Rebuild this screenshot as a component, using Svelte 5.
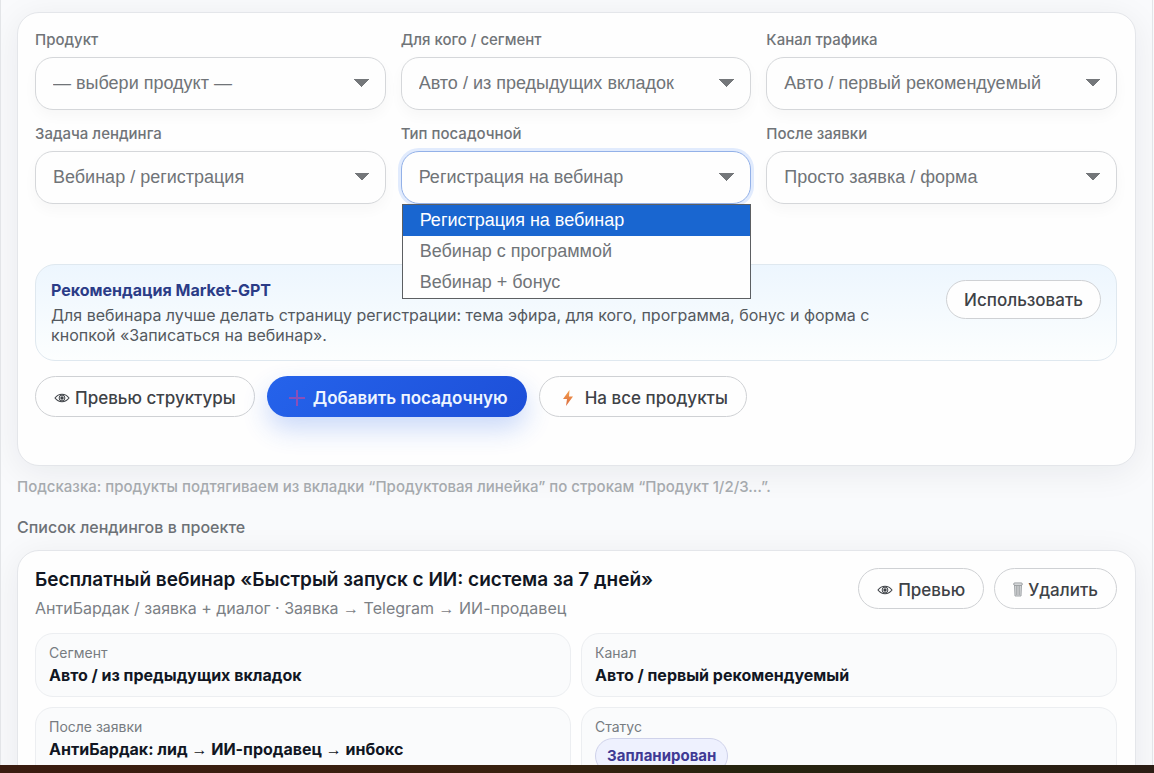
<script>
  let fields = $state([
    { id: 'product', label: 'Продукт', value: '— выбери продукт —', options: ['— выбери продукт —'] },
    { id: 'segment', label: 'Для кого / сегмент', value: 'Авто / из предыдущих вкладок', options: ['Авто / из предыдущих вкладок'] },
    { id: 'channel', label: 'Канал трафика', value: 'Авто / первый рекомендуемый', options: ['Авто / первый рекомендуемый'] },
    { id: 'goal', label: 'Задача лендинга', value: 'Вебинар / регистрация', options: ['Вебинар / регистрация'] },
    {
      id: 'type',
      label: 'Тип посадочной',
      value: 'Регистрация на вебинар',
      options: ['Регистрация на вебинар', 'Вебинар с программой', 'Вебинар + бонус']
    },
    { id: 'after', label: 'После заявки', value: 'Просто заявка / форма', options: ['Просто заявка / форма'] }
  ])
  let openField = $state('type')

  const route = 'АнтиБардак / заявка + диалог · Заявка → Telegram → ИИ-продавец'
  const details = [
    { label: 'Сегмент', value: 'Авто / из предыдущих вкладок' },
    { label: 'Канал', value: 'Авто / первый рекомендуемый' },
    { label: 'После заявки', value: 'АнтиБардак: лид → ИИ-продавец → инбокс' },
    { label: 'Статус', value: 'Запланирован', badge: true }
  ]

  function toggle(event, field) {
    if (field.options.length < 2) return
    event.preventDefault()
    openField = openField === field.id ? '' : field.id
  }

  function choose(field, option) {
    field.value = option
    openField = ''
  }
</script>

{#snippet eye()}
  <svg class="eye" viewBox="0 0 16 12" aria-hidden="true">
    <path d="M1 6C3 3.400 5.300 2.300 8 2.300S13 3.400 15 6C13 8.600 10.700 9.700 8 9.700S3 8.600 1 6Z" fill="none" stroke="currentColor" stroke-width="1.100" />
    <circle cx="8" cy="6" r="2.900" fill="none" stroke="currentColor" stroke-width="1" />
    <circle cx="8" cy="6" r="1.700" fill="currentColor" />
  </svg>
{/snippet}

<!-- arrows are set in a plainer face than the text around them -->
{#snippet steps(text)}
  {#each text.split('→') as part, i}{#if i > 0}<span class="arrow">→</span>{/if}{part}{/each}
{/snippet}

<div class="screen">
  <main>
    <section class="card builder">
      <div class="fields">
        {#each fields as field (field.id)}
          <div class="field">
            <label for={field.id}>{field.label}</label>
            <select
              id={field.id}
              class:open={openField === field.id}
              bind:value={field.value}
              onmousedown={(event) => toggle(event, field)}
            >
              {#each field.options as option}
                <option>{option}</option>
              {/each}
            </select>
            {#if openField === field.id}
              <div class="menu" role="listbox" aria-label={field.label}>
                {#each field.options as option}
                  <button
                    type="button"
                    role="option"
                    aria-selected={option === field.value}
                    onclick={() => choose(field, option)}>{option}</button>
                {/each}
              </div>
            {/if}
          </div>
        {/each}
      </div>

      <div class="tip">
        <div class="tip-text">
          <h3>Рекомендация Market-GPT</h3>
          <p>Для вебинара лучше делать страницу регистрации: тема эфира, для кого, программа, бонус и форма с кнопкой «Записаться на вебинар».</p>
        </div>
        <button class="btn small" type="button">Использовать</button>
      </div>

      <div class="actions">
        <button class="btn" type="button">{@render eye()}Превью структуры</button>
        <button class="btn primary" type="button">
          <svg class="plus" viewBox="0 0 16 16" aria-hidden="true">
            <path d="M8 0V16M0 8H16" stroke="#8a4fb8" stroke-width="2" />
          </svg>Добавить посадочную
        </button>
        <button class="btn" type="button">
          <svg class="bolt" viewBox="0 0 16 18" aria-hidden="true">
            <defs>
              <linearGradient id="bolt-fill" x1="0" y1="0" x2="0" y2="1">
                <stop offset="0" stop-color="#f5a04c" />
                <stop offset="1" stop-color="#d9693f" />
              </linearGradient>
            </defs>
            <path d="M9.500 1L3 10H7L6 17L13 7.500H9Z" fill="url(#bolt-fill)" />
          </svg>На все продукты
        </button>
      </div>
    </section>

    <p class="hint">Подсказка: продукты подтягиваем из вкладки “Продуктовая линейка” по строкам “Продукт 1/2/3…”.</p>
    <h2>Список лендингов в проекте</h2>

    <article class="card landing">
      <header>
        <div class="heading">
          <h3>Бесплатный вебинар «Быстрый запуск с ИИ: система за 7 дней»</h3>
          <p>{@render steps(route)}</p>
        </div>
        <div class="tools">
          <button class="btn" type="button">{@render eye()}Превью</button>
          <button class="btn" type="button">
            <svg class="trash" viewBox="0 0 10 15" aria-hidden="true">
              <path d="M1.500 3L2 14H8L8.500 3Z" fill="#d4d6d8" stroke="#a3a7aa" stroke-width="1" />
              <path d="M3.500 4V13M5 4V13M6.500 4V13" stroke="#9b9fa2" stroke-width=".7" />
              <rect x=".7" y="1" width="8.600" height="2.200" rx="1" fill="#f3f4f5" stroke="#85898c" stroke-width=".9" />
            </svg>Удалить
          </button>
        </div>
      </header>
      <dl>
        {#each details as item}
          <div class="detail">
            <dt>{item.label}</dt>
            <dd><span class:badge={item.badge}>{@render steps(item.value)}</span></dd>
          </div>
        {/each}
      </dl>
    </article>
  </main>
  <footer></footer>
</div>

<style>
  :global(body) {
    background: #f9fafc;
    font-family: Inter, "Noto Sans", sans-serif;
    color: #111623;
  }
  .screen {
    display: flex;
    flex-direction: column;
    height: 100vh;
    overflow: hidden;
  }
  main {
    flex: 1;
    min-height: 0;
    overflow: hidden;
    margin-right: 1px;
    padding: 12px 16px 0;
    border: solid #e3e5e8;
    border-width: 0 1px;
  }
  footer {
    flex: none;
    height: 8px;
    background: linear-gradient(90deg, #3a1c10, #38210f 45%, #25240f 65%, #2b1d14);
  }
  h2, h3, p, dl, dd {
    margin: 0;
  }
  .card {
    background: #fefefe;
    border: 1px solid #e4e6ea;
    border-radius: 22px;
    box-shadow: 0 6px 34px rgba(15, 23, 42, 0.07);
  }
  .builder {
    padding: 17px 18px 48px 17px;
  }
  .fields {
    display: grid;
    grid-template-columns: repeat(3, minmax(0, 1fr));
    gap: 14px 15px;
  }
  .field {
    position: relative;
  }
  label {
    display: block;
    margin-bottom: 7px;
    font-size: 15px;
    font-weight: 500;
    line-height: 20px;
    color: #707478;
  }
  select {
    appearance: none;
    display: block;
    width: 100%;
    height: 53px;
    padding: 0 44px 2px 17px;
    border: 1px solid #d5d7da;
    border-radius: 18px;
    background-color: #fefefe;
    background-image: linear-gradient(45deg, transparent 50%, #74777a 50%), linear-gradient(135deg, #74777a 50%, transparent 50%);
    background-position: calc(100% - 23px) 21px, calc(100% - 15px) 21px;
    background-size: 8px 8px;
    background-repeat: no-repeat;
    box-shadow: 0 6px 14px rgba(15, 23, 42, 0.03);
    font-family: "Liberation Sans", Arial, sans-serif;
    font-size: 18px;
    color: #707478;
  }
  select.open {
    border-color: #93b1e8;
    box-shadow: 0 0 0 3px #e1ebfd;
  }
  .menu {
    position: absolute;
    z-index: 2;
    top: 100%;
    left: 1px;
    right: 0;
    border: 1px solid #5c5f62;
    background: #fefefe;
  }
  .menu button {
    display: block;
    width: 100%;
    height: 31px;
    padding: 0 17px;
    border: 0;
    background: none;
    text-align: left;
    font-family: "Liberation Sans", Arial, sans-serif;
    font-size: 18px;
    color: #707478;
  }
  .menu button[aria-selected="true"] {
    background: #1966d0;
    color: #fff;
  }
  .tip {
    display: flex;
    align-items: flex-start;
    justify-content: space-between;
    gap: 48px;
    margin-top: 60px;
    padding: 15px;
    border: 1px solid #dfe8ef;
    border-radius: 20px;
    background: linear-gradient(180deg, #edf6fe, #fcfefe);
  }
  .tip h3 {
    font-size: 16px;
    font-weight: 700;
    line-height: 20px;
    color: #2b3c87;
  }
  .tip p {
    margin-top: 5px;
    font-size: 16px;
    line-height: 20px;
    color: #54595f;
  }
  .btn {
    display: inline-flex;
    align-items: center;
    flex: none;
    height: 41px;
    padding: 2px 18px 0;
    border: 1px solid #cfd1d4;
    border-radius: 21px;
    background: #fefefe;
    font-family: inherit;
    font-size: 17px;
    font-weight: 500;
    color: #3e4247;
    white-space: nowrap;
  }
  .btn.small {
    height: 39px;
    padding: 0 17px;
  }
  .btn.primary {
    border-color: transparent;
    background: linear-gradient(135deg, #2563eb, #1d4fd8) border-box;
    box-shadow: 0 12px 26px rgba(37, 99, 235, 0.24);
    font-weight: 600;
    color: #eef5ff;
  }
  .actions {
    display: flex;
    flex-wrap: wrap;
    gap: 12px;
    margin-top: 15px;
  }
  .eye {
    width: 16px;
    height: 12px;
    margin-right: 5px;
  }
  .plus {
    width: 16px;
    height: 16px;
    margin: 0 8px 0 3px;
  }
  .bolt {
    width: 16px;
    height: 18px;
    margin: 0 9px 0 2px;
  }
  .trash {
    width: 10px;
    height: 15px;
    margin-right: 5px;
  }
  .hint {
    margin-top: 11px;
    font-size: 15px;
    font-weight: 500;
    line-height: 20px;
    color: #a6aaae;
  }
  h2 {
    margin: 20px 0 13px;
    font-size: 16px;
    font-weight: 500;
    line-height: 20px;
    color: #6d7176;
  }
  .landing {
    padding: 17px 18px 17px 17px;
  }
  header {
    display: flex;
    align-items: flex-start;
    justify-content: space-between;
    gap: 16px;
  }
  .heading h3 {
    font-size: 19px;
    font-weight: 600;
    line-height: 24px;
  }
  .heading p {
    margin-top: 6px;
    font-size: 16px;
    line-height: 20px;
    color: #7b8085;
  }
  .tools {
    display: flex;
    gap: 10px;
  }
  .arrow {
    font-family: "Liberation Sans", Arial, sans-serif;
    font-weight: 400;
  }
  dl {
    display: grid;
    grid-template-columns: repeat(2, minmax(0, 1fr));
    gap: 10px;
    margin-top: 14px;
  }
  .detail {
    padding: 10px 13px;
    border: 1px solid #eceef1;
    border-radius: 18px;
    background: #fafbfc;
  }
  dt {
    font-size: 14px;
    line-height: 18px;
    color: #777c81;
  }
  dd {
    margin-top: 2px;
    font-size: 16px;
    font-weight: 700;
    line-height: 22px;
  }
  .badge {
    display: inline-block;
    padding: 6px 11px;
    border: 1px solid #cfd2ea;
    border-radius: 18px;
    background: #eef1fe;
    font-size: 15px;
    color: #3f3a94;
  }
</style>
